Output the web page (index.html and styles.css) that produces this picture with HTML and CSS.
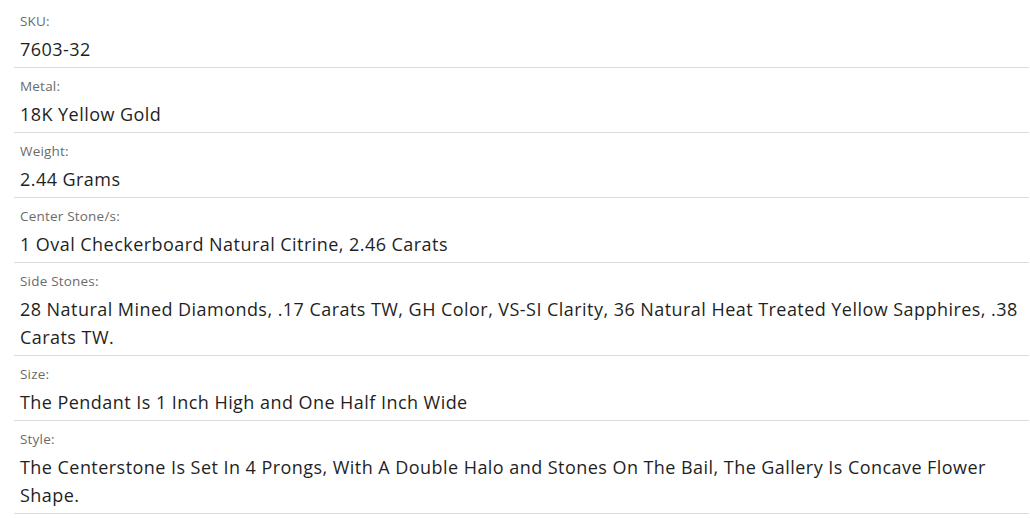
FILE: index.html
```html
<!DOCTYPE html>
<html>
<head>
<meta charset="utf-8">
<link rel="stylesheet" href="styles.css">
</head>
<body>
<div class="details">
  <div class="row"><div class="label">SKU:</div><div class="value">7603-32</div></div>
  <div class="row"><div class="label">Metal:</div><div class="value">18K Yellow Gold</div></div>
  <div class="row"><div class="label">Weight:</div><div class="value">2.44 Grams</div></div>
  <div class="row"><div class="label">Center Stone/s:</div><div class="value">1 Oval Checkerboard Natural Citrine, 2.46 Carats</div></div>
  <div class="row"><div class="label">Side Stones:</div><div class="value">28 Natural Mined Diamonds, .17 Carats TW, GH Color, VS-SI Clarity, 36 Natural Heat Treated Yellow Sapphires, .38 Carats TW.</div></div>
  <div class="row"><div class="label">Size:</div><div class="value">The Pendant Is 1 Inch High and One Half Inch Wide</div></div>
  <div class="row"><div class="label">Style:</div><div class="value">The Centerstone Is Set In 4 Prongs, With A Double Halo and Stones On The Bail, The Gallery Is Concave Flower Shape.</div></div>
</div>
</body>
</html>
```
FILE: styles.css
```css
html, body {
  background: #ffffff;
}
body {
  margin: 3px 1px 0 14px;
  font-family: "Open Sans", "Lato", sans-serif;
}
.details {
  display: flex;
  flex-direction: column;
}
.row {
  border-bottom: 1px solid #dddbda;
  padding: 8px 0 4px 6px;
  display: flex;
  flex-direction: column;
  gap: 4px;
}
.label {
  font-size: 13.5px;
  line-height: 20px;
  letter-spacing: 0.2px;
  color: #6b6b6b;
}
.value {
  font-size: 18px;
  line-height: 28px;
  letter-spacing: 0.45px;
  color: #1f1f1f;
}
```
